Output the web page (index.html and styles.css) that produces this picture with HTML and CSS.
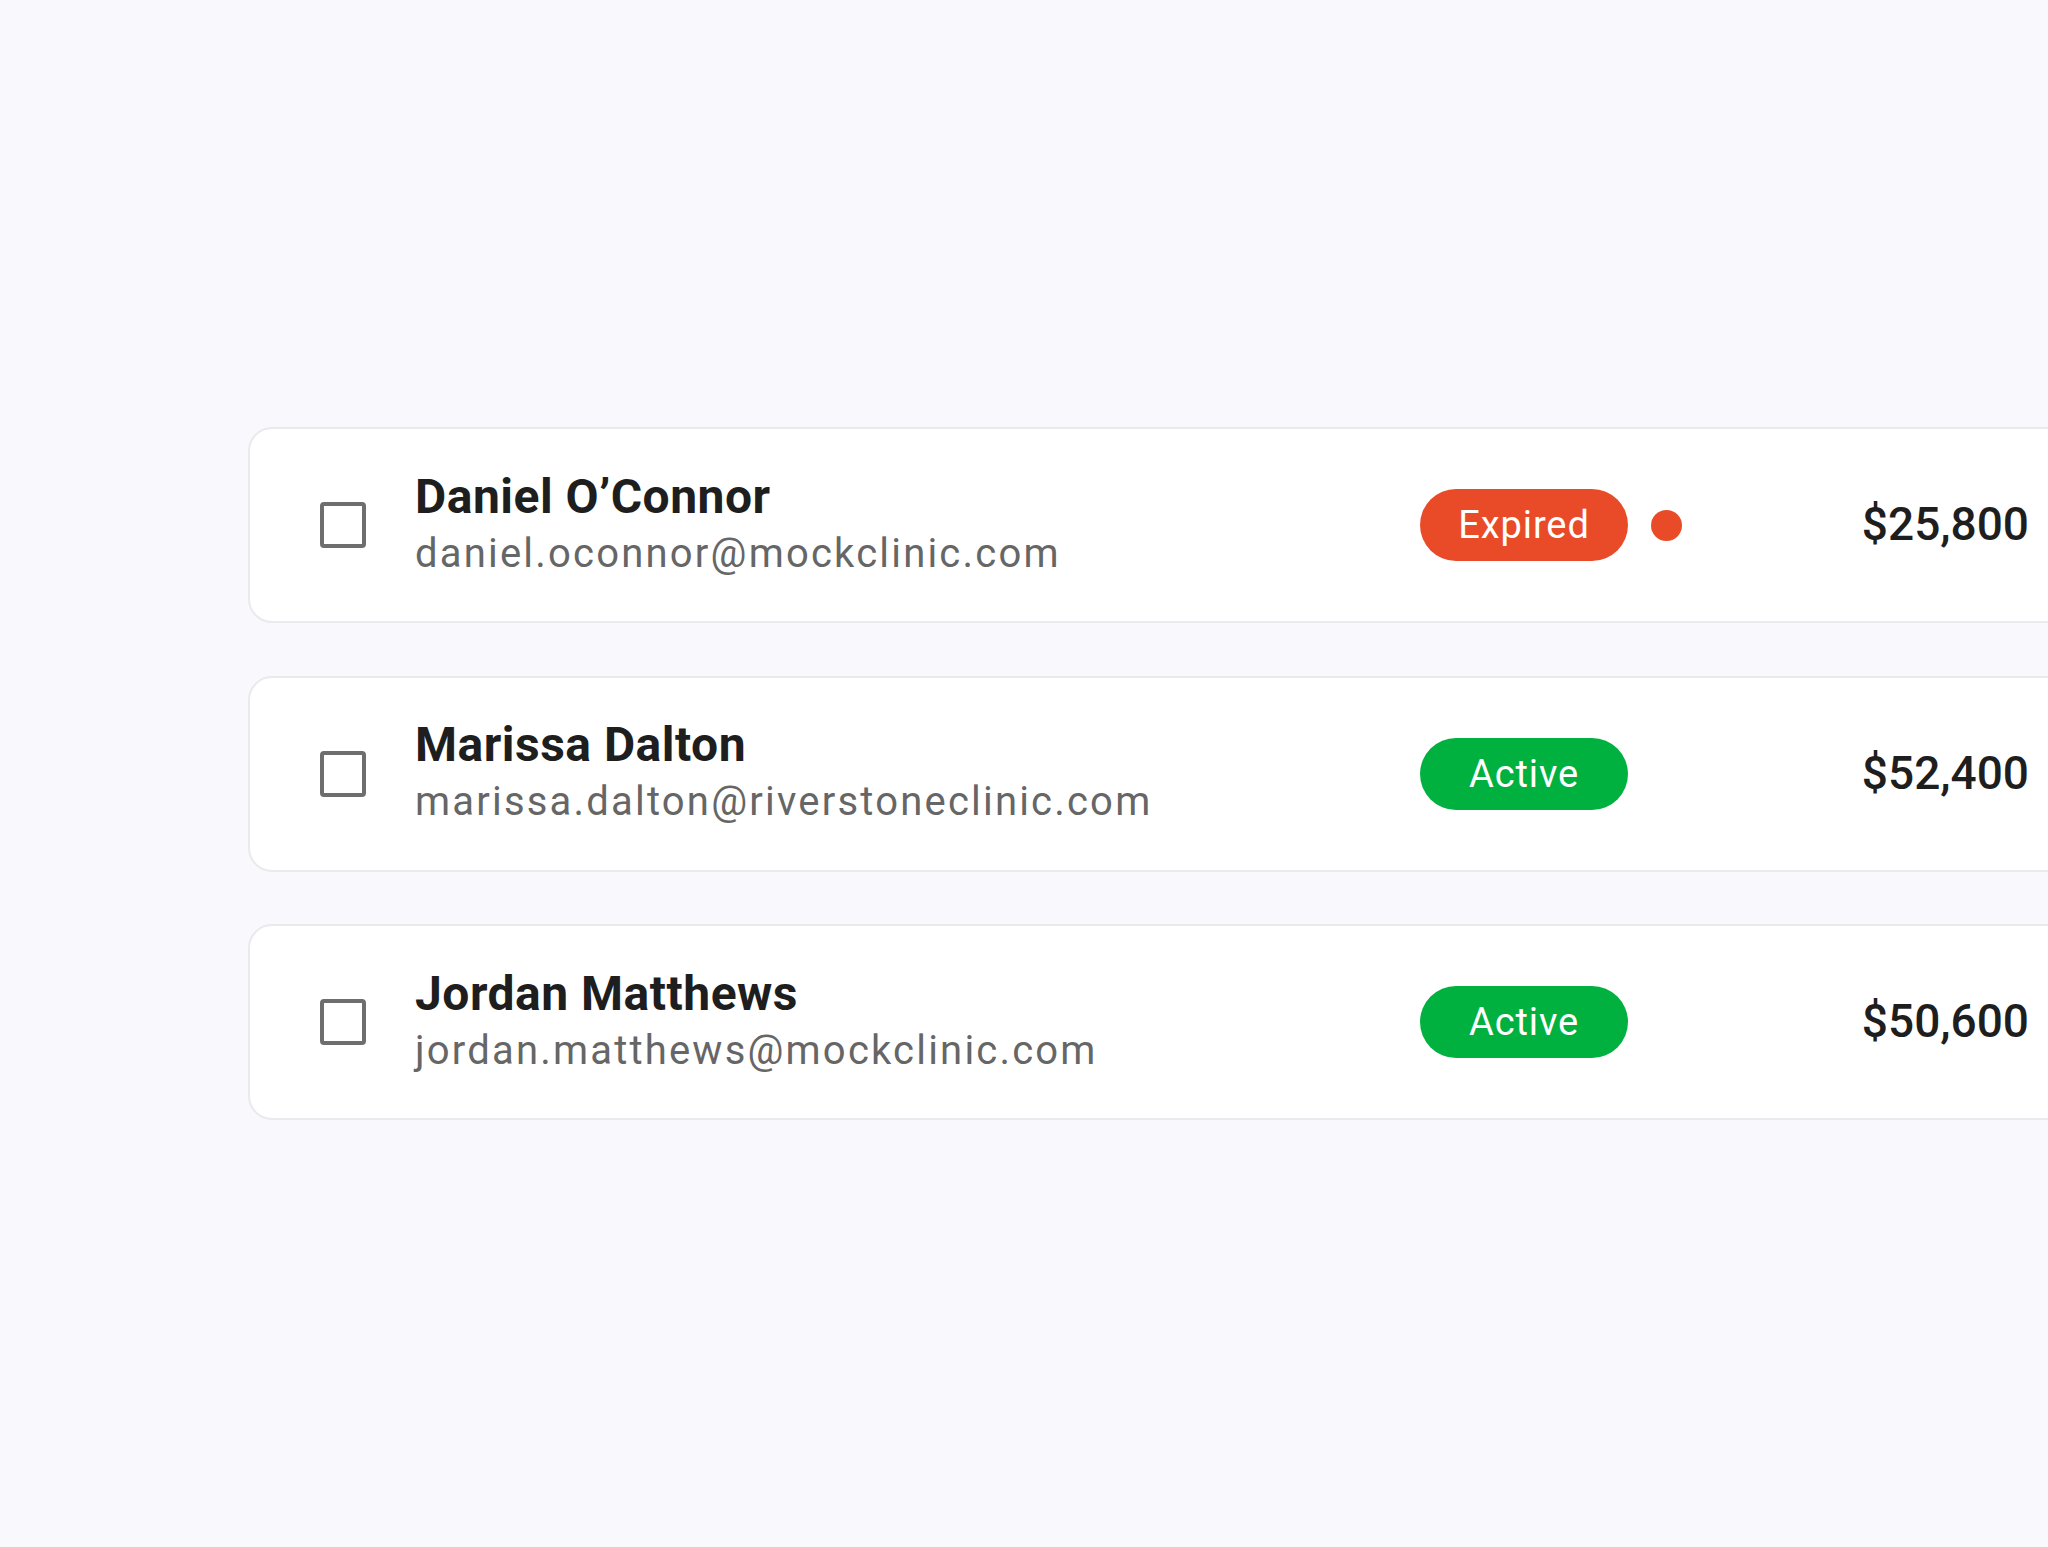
FILE: index.html
```html
<!DOCTYPE html>
<html lang="en">
<head>
<meta charset="utf-8">
<title>Clients</title>
<link rel="stylesheet" href="styles.css">
</head>
<body>
<main class="page">
  <ul class="list">
    <li class="card">
      <span class="checkbox"></span>
      <div class="info">
        <div class="name">Daniel O’Connor</div>
        <div class="email">daniel.oconnor@mockclinic.com</div>
      </div>
      <span class="badge badge-expired">Expired</span>
      <span class="dot-slot"><span class="dot"></span></span>
      <span class="amount">$25,800</span>
    </li>
    <li class="card">
      <span class="checkbox"></span>
      <div class="info">
        <div class="name">Marissa Dalton</div>
        <div class="email">marissa.dalton@riverstoneclinic.com</div>
      </div>
      <span class="badge badge-active">Active</span>
      <span class="dot-slot"></span>
      <span class="amount">$52,400</span>
    </li>
    <li class="card">
      <span class="checkbox"></span>
      <div class="info">
        <div class="name">Jordan Matthews</div>
        <div class="email">jordan.matthews@mockclinic.com</div>
      </div>
      <span class="badge badge-active">Active</span>
      <span class="dot-slot"></span>
      <span class="amount">$50,600</span>
    </li>
  </ul>
</main>
</body>
</html>
```

FILE: styles.css
```css
html, body {
  margin: 0;
  padding: 0;
}
body {
  background: #f8f8fd;
  font-family: Roboto, "Liberation Sans", sans-serif;
  width: 2048px;
  height: 1547px;
  overflow: hidden;
}
.page {
  padding: 427px 0 0 248px;
}
.list {
  list-style: none;
  margin: 0;
  padding: 0;
  display: flex;
  flex-direction: column;
  gap: 52.5px;
}
.card {
  box-sizing: border-box;
  width: 1854px;
  height: 196px;
  background: #ffffff;
  border: 2px solid #e9e9ee;
  border-radius: 24px;
  padding: 0 71px 0 70px;
  display: flex;
  align-items: center;
}
.checkbox {
  box-sizing: border-box;
  flex: 0 0 46px;
  width: 46px;
  height: 46px;
  border: 4.5px solid #6e6e6e;
  border-radius: 4px;
  margin-right: 49px;
}
.info {
  flex: 0 0 1005px;
  display: flex;
  flex-direction: column;
  padding-bottom: 2px;
}
.name {
  font-size: 48px;
  font-weight: 700;
  line-height: 56px;
  color: #1e1e1e;
  letter-spacing: 0.5px;
}
.email {
  font-size: 40px;
  font-weight: 400;
  line-height: 52px;
  margin-top: 3px;
  color: #666666;
  letter-spacing: 2.2px;
}
.badge {
  flex: 0 0 208px;
  box-sizing: border-box;
  height: 72px;
  border-radius: 36px;
  display: flex;
  align-items: center;
  justify-content: center;
  color: #ffffff;
  font-size: 38px;
  font-weight: 400;
  letter-spacing: 0.9px;
}
.badge-expired {
  background: #e94b29;
}
.badge-active {
  background: #00b140;
}
.dot-slot {
  flex: 0 0 54px;
  display: flex;
  align-items: center;
}
.dot {
  width: 31px;
  height: 31px;
  margin-left: 23px;
  border-radius: 50%;
  background: #e94b29;
}
.amount {
  flex: 1 1 auto;
  text-align: right;
  font-size: 46px;
  font-weight: 500;
  color: #1e1e1e;
  padding-bottom: 2px;
}
```
